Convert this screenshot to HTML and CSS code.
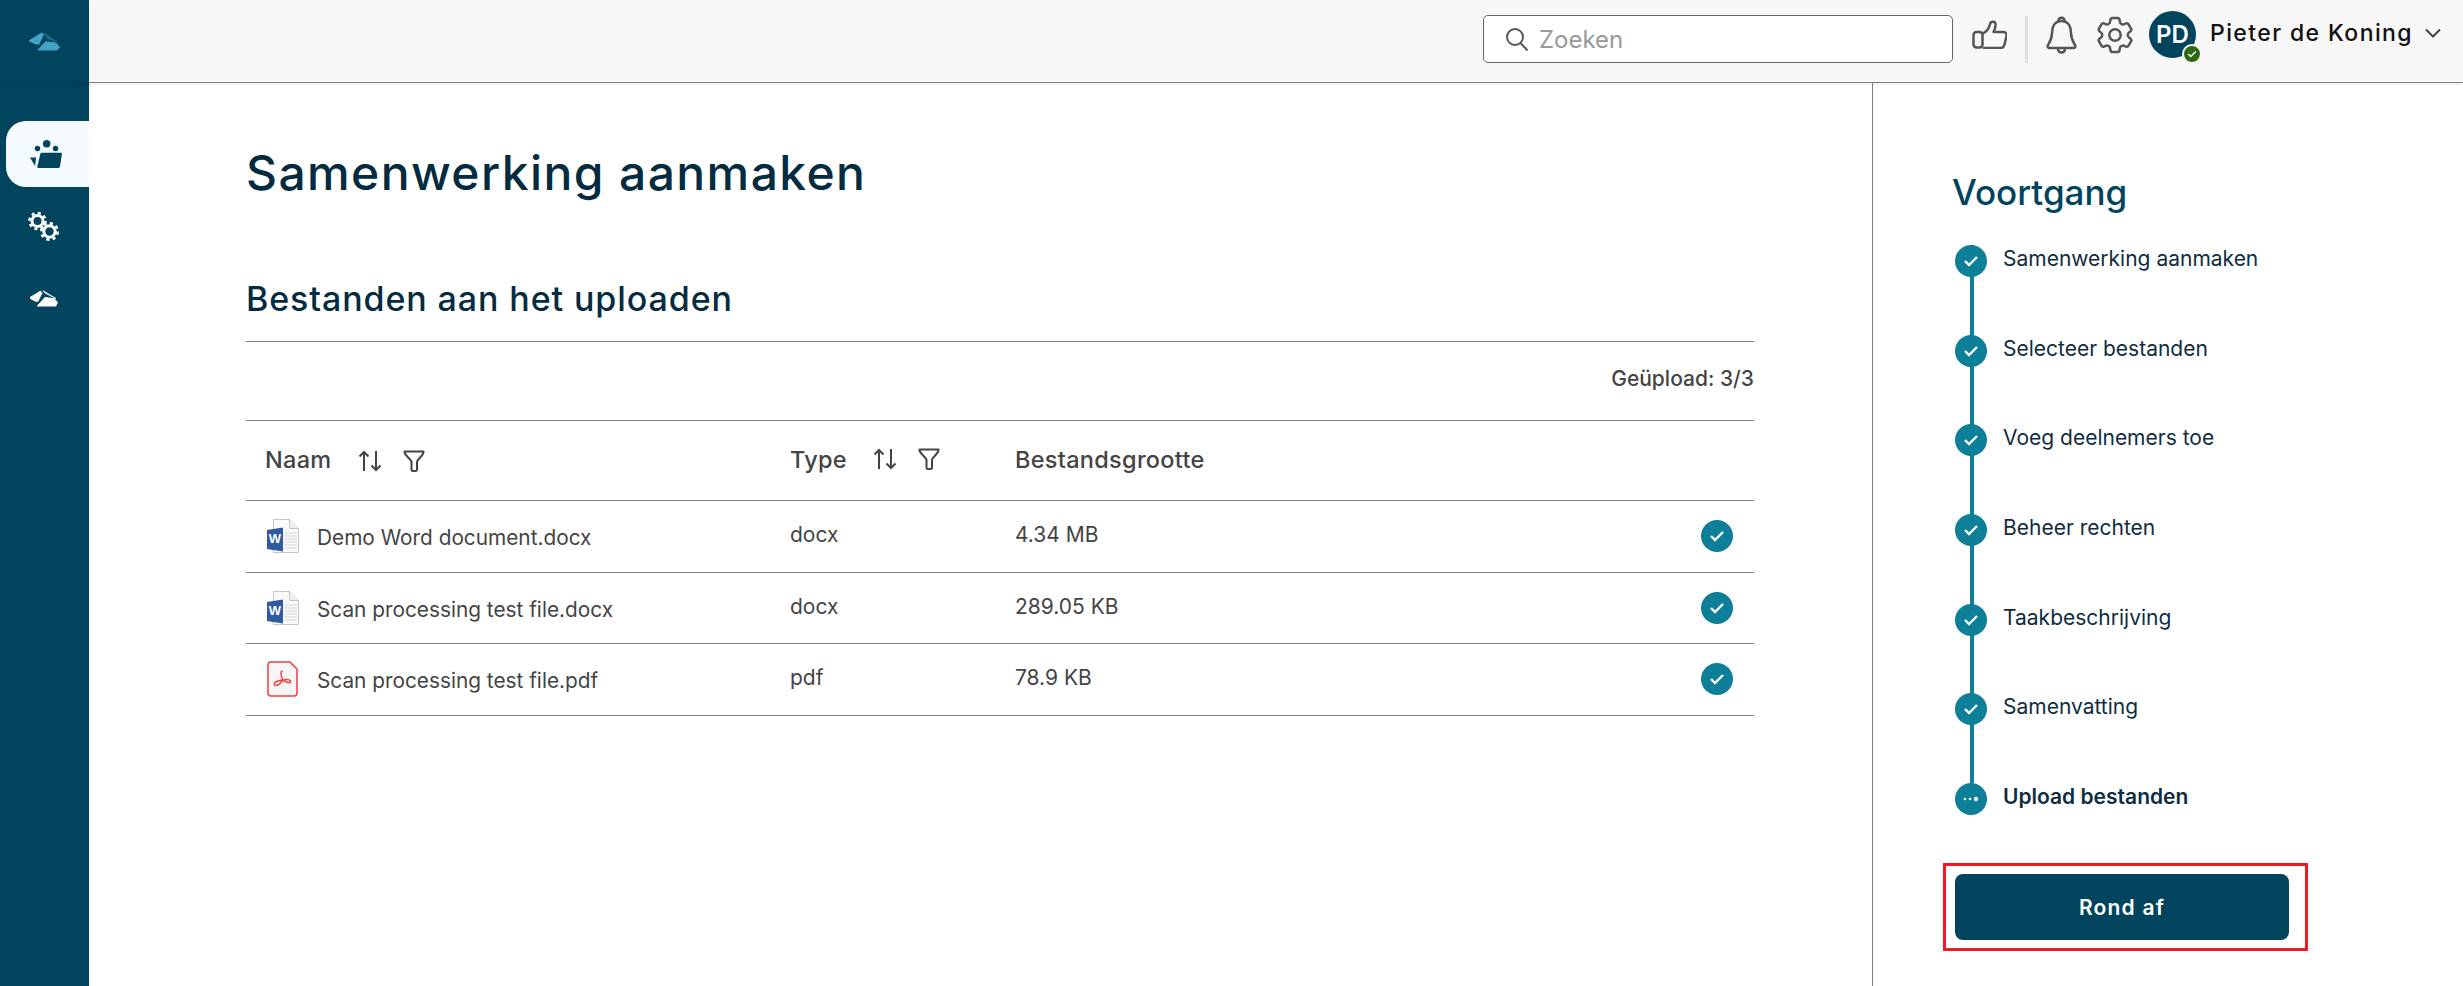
FILE: index.html
```html
<!DOCTYPE html>
<html lang="nl">
<head>
    <meta charset="UTF-8">
    <title>Samenwerking aanmaken</title>
    <link rel="stylesheet" href="styles.css">
</head>
<body>

<!-- Shared icons -->
<svg class="sprite">
    <symbol id="i-check" viewBox="0 0 16 12"><path d="m2 6 4 4 8-8" fill="none" stroke="#fff" stroke-width="2.400"/></symbol>
    <symbol id="i-sort" viewBox="0 0 24 22"><path d="M6 21V2M1.500 6.500 6 2l4.500 4.500M18 1v19M13.500 15.500 18 20l4.500-4.500" fill="none" stroke="#444" stroke-width="2"/></symbol>
    <symbol id="i-filter" viewBox="0 0 22 22"><path d="M1.500 1.500h19c.5 4-6 7-6.500 10.500v7.500c0 1-1 1.500-2 1.500h-2c-1 0-1.500-1-1.500-1.500V12C8 8.500 1 5.500 1.500 1.500Z" fill="none" stroke="#444" stroke-width="2" stroke-linejoin="round"/></symbol>
    <symbol id="i-word" viewBox="0 0 32 34"><path d="M6.500.5h16l9 9v24h-25Z" fill="#fafafa" stroke="#c4c4c4"/><path d="M22.500.5v9h9" fill="#eee" stroke="#c4c4c4"/><path d="M17 14h13M17 17h13M17 20h13M17 23h13M17 26h13M17 29h13" stroke="#d4d4d4"/><path d="M0 11 16 8.500v24L0 30Z" fill="#2f5aa0"/></symbol>
</svg>

<div class="app">
    <!-- Sidebar -->
    <aside class="sidebar">
        <div class="side-logo">
            <svg width="31" height="19" viewBox="0 0 92 55" stroke-linejoin="round"><path d="M2 24 37 3l6 4-14 28-7 0L2 27Z" fill="#45a3c6" stroke="#45a3c6" stroke-width="3"/><path d="M43 1 84 29 55 19Z" fill="#1f6a88" stroke="#1f6a88" stroke-width="2"/><path d="M27 53 50 28l29 4 11 12-8 9Z" fill="#45a3c6" stroke="#45a3c6" stroke-width="3"/></svg>
        </div>
        <nav class="side-nav">
            <a class="side-item active">
                <svg width="32" height="28" viewBox="0 0 94 82" fill="#00445e"><circle cx="49" cy="11" r="11"/><circle cx="22" cy="25" r="8"/><circle cx="75" cy="25" r="8"/><path d="M0 51h18l-3 25Z"/><path d="M35 37h56c2 0 3 1 3 3l-6 38c-.5 3-2 4-5 4H25c-3 0-4-2-3.500-4l9-38c.5-2 2-3 4.500-3Z"/></svg>
            </a>
            <a class="side-item">
                <svg width="31" height="31" viewBox="0 0 31 31" fill="none" stroke="#fff"><circle cx="9.500" cy="10" r="5.500" stroke-width="3"/><circle cx="9.500" cy="10" r="8" stroke-width="2.600" stroke-dasharray="3.100 3.180"/><circle cx="21.500" cy="20.500" r="5.700" stroke-width="3"/><circle cx="21.500" cy="20.500" r="8.200" stroke-width="2.600" stroke-dasharray="3.200 3.240"/></svg>
            </a>
            <a class="side-item">
                <svg width="28" height="17" viewBox="0 0 82 48" fill="#fff" stroke="#fff" stroke-linejoin="round"><path d="M2 20 30 3l5 4-12 25-6 0L2 24Z" stroke-width="3"/><path d="M38 1 76 24 44 8Z" stroke-width="2"/><path d="M22 46 44 21l27 4 9 11-5 10Z" stroke-width="3"/></svg>
            </a>
        </nav>
    </aside>

    <div class="main-area">
        <!-- Top bar -->
        <header class="topbar">
            <div class="search">
                <svg width="24" height="24" viewBox="0 0 24 24" fill="none" stroke="#555" stroke-width="2"><circle cx="10" cy="10" r="8"/><path d="m15.500 16 7 7.500"/></svg>
                <span>Zoeken</span>
            </div>
            <svg class="top-icon thumb-icon" width="35" height="29" viewBox="0 0 35 29" fill="none" stroke="#555" stroke-width="2.500" stroke-linejoin="round"><rect x="1.500" y="12" width="9" height="15.500" rx="3"/><path d="M10.500 13.500c4-1.500 6.500-5 7.500-9.500.5-2.500 5-3.500 5.500 0 .3 2-.5 5-2 8h9.500c2.500 0 4 1.500 3.500 4l-2 8.500c-.5 2-1.500 3.500-4 3.500H10.500"/></svg>
            <span class="top-sep"></span>
            <svg class="top-icon bell-icon" width="31" height="38" viewBox="0 0 31 38" fill="none" stroke="#555" stroke-width="2.500" stroke-linejoin="round"><path d="M15.500 5C8.500 5 6 11 6 17c0 6-2.500 9.500-4 12-1 2 0 3 2 3h23c2 0 3-1 2-3-1.500-2.500-4-6-4-12 0-6-2.500-12-9.500-12Z"/><path d="M12.500 5c0-4.500 6-4.500 6 0"/><path d="M12 32c0 6 7 6 7 0"/></svg>
            <svg class="top-icon gear-icon" width="36" height="38" viewBox="2.500 2.500 19 19" fill="none" stroke="#555" stroke-width="1.300" stroke-linejoin="round"><circle cx="12" cy="12" r="3"/><path d="M9.594 3.940c.09-.542.56-.94 1.110-.94h2.593c.55 0 1.020.398 1.110.94l.213 1.281c.063.374.313.686.645.870.074.04.147.083.22.127.325.196.72.257 1.075.124l1.217-.456a1.125 1.125 0 0 1 1.370.49l1.296 2.247a1.125 1.125 0 0 1-.26 1.431l-1.003.827c-.293.241-.438.613-.43.992a7.723 7.723 0 0 1 0 .255c-.008.378.137.75.43.991l1.004.827c.424.35.534.955.26 1.430l-1.298 2.247a1.125 1.125 0 0 1-1.369.491l-1.217-.456c-.355-.133-.75-.072-1.076.124a6.470 6.470 0 0 1-.22.128c-.331.183-.581.495-.644.869l-.213 1.281c-.09.543-.56.94-1.110.94h-2.594c-.55 0-1.019-.398-1.110-.94l-.213-1.281c-.062-.374-.312-.686-.644-.87a6.520 6.520 0 0 1-.22-.127c-.325-.196-.72-.257-1.076-.124l-1.217.456a1.125 1.125 0 0 1-1.369-.49l-1.297-2.247a1.125 1.125 0 0 1 .26-1.431l1.004-.827c.292-.24.437-.613.43-.991a6.932 6.932 0 0 1 0-.255c.007-.38-.138-.751-.43-.992l-1.004-.827a1.125 1.125 0 0 1-.26-1.430l1.297-2.247a1.125 1.125 0 0 1 1.370-.491l1.216.456c.356.133.751.072 1.076-.124.072-.044.146-.086.22-.128.332-.183.582-.495.644-.869l.214-1.280Z"/></svg>
            <div class="avatar">PD
                <span class="avatar-badge"><svg width="10" height="8" viewBox="0 0 16 12"><use href="#i-check"/></svg></span>
            </div>
            <span class="user-name">Pieter de Koning</span>
            <svg class="user-caret" width="16" height="10" viewBox="0 0 16 10" fill="none" stroke="#444" stroke-width="2"><path d="m1 1.500 7 7 7-7"/></svg>
        </header>

        <div class="content">
            <main class="page">
                <h1>Samenwerking aanmaken</h1>
                <h2>Bestanden aan het uploaden</h2>
                <div class="upload-count">Geüpload: 3/3</div>

                <div class="file-table">
                    <div class="file-row file-head">
                        <div class="col-name"><span class="label-name">Naam</span>
                            <svg class="sort-icon" width="24" height="22"><use href="#i-sort"/></svg>
                            <svg class="filter-icon" width="22" height="22"><use href="#i-filter"/></svg>
                        </div>
                        <div class="col-type"><span class="label-type">Type</span>
                            <svg class="sort-icon" width="24" height="22"><use href="#i-sort"/></svg>
                            <svg class="filter-icon" width="22" height="22"><use href="#i-filter"/></svg>
                        </div>
                        <div class="col-size">Bestandsgrootte</div>
                        <div class="col-status"></div>
                    </div>

                    <div class="file-row">
                        <div class="col-name">
                            <svg class="file-icon" width="32" height="34"><use href="#i-word"/><text x="8" y="24" class="word-letter">W</text></svg>
                            <span class="file-name">Demo Word document.docx</span>
                        </div>
                        <div class="col-type">docx</div>
                        <div class="col-size">4.34 MB</div>
                        <div class="col-status"><span class="check-dot"><svg width="16" height="12"><use href="#i-check"/></svg></span></div>
                    </div>
                    <div class="file-row">
                        <div class="col-name">
                            <svg class="file-icon" width="32" height="34"><use href="#i-word"/><text x="8" y="24" class="word-letter">W</text></svg>
                            <span class="file-name">Scan processing test file.docx</span>
                        </div>
                        <div class="col-type">docx</div>
                        <div class="col-size">289.05 KB</div>
                        <div class="col-status"><span class="check-dot"><svg width="16" height="12"><use href="#i-check"/></svg></span></div>
                    </div>
                    <div class="file-row">
                        <div class="col-name">
                            <svg class="file-icon" width="32" height="36" viewBox="0 0 32 36" fill="none"><path d="M4 1h19l7 7v24c0 1.500-1 3-3 3H4c-1.500 0-3-1-3-3V4c0-2 1.500-3 3-3Z" fill="#f6f6f6" stroke="#f04040" stroke-width="1.500"/><path d="M15.500 10c-2.500 0-1.500 5 .5 9M16 19c-2 3-6 7-8.500 5-1.500-2 3-5 8.500-5 5-1 8 0 7.500 2-1 1.500-5.500 0-7.500-2Z" stroke="#f04040" stroke-width="1.500"/></svg>
                            <span class="file-name">Scan processing test file.pdf</span>
                        </div>
                        <div class="col-type">pdf</div>
                        <div class="col-size">78.9 KB</div>
                        <div class="col-status"><span class="check-dot"><svg width="16" height="12"><use href="#i-check"/></svg></span></div>
                    </div>
                </div>
            </main>

            <!-- Progress panel -->
            <aside class="progress">
                <h3>Voortgang</h3>
                <ol class="steps">
                    <li class="step"><span class="check-dot"><svg width="16" height="12"><use href="#i-check"/></svg></span>Samenwerking aanmaken</li>
                    <li class="step"><span class="check-dot"><svg width="16" height="12"><use href="#i-check"/></svg></span>Selecteer bestanden</li>
                    <li class="step"><span class="check-dot"><svg width="16" height="12"><use href="#i-check"/></svg></span>Voeg deelnemers toe</li>
                    <li class="step"><span class="check-dot"><svg width="16" height="12"><use href="#i-check"/></svg></span>Beheer rechten</li>
                    <li class="step"><span class="check-dot"><svg width="16" height="12"><use href="#i-check"/></svg></span>Taakbeschrijving</li>
                    <li class="step"><span class="check-dot"><svg width="16" height="12"><use href="#i-check"/></svg></span>Samenvatting</li>
                    <li class="step current"><span class="check-dot"><svg width="16" height="6" viewBox="0 0 16 6" fill="#fff"><circle cx="2" cy="3" r="1.300"/><circle cx="7" cy="3" r="1.300"/><circle cx="13" cy="3" r="2.200"/></svg></span>Upload bestanden</li>
                </ol>
                <div class="finish-mark">
                    <button class="finish-btn">Rond af</button>
                </div>
            </aside>
        </div>
    </div>
</div>

</body>
</html>
```

FILE: styles.css
```css
* {
    box-sizing: border-box;
}
html, body {
    height: 100%;
}
body {
    margin: 0;
    font-family: "Inter", "Open Sans", sans-serif;
    color: #0f2d3f;
    background-color: #fff;
    overflow: hidden;
}
.sprite {
    display: none;
}
.app {
    display: flex;
    height: 986px;
}

/* Sidebar */
.sidebar {
    width: 89px;
    flex: none;
    background-color: #00445e;
}
.side-logo {
    height: 83px;
    display: flex;
    align-items: center;
    justify-content: center;
    box-shadow: 0 2px 4px rgba(0, 0, 0, 0.15);
}
.side-nav {
    margin-top: 38px;
    display: flex;
    flex-direction: column;
}
.side-item {
    height: 66px;
    margin-left: 6px;
    margin-bottom: 6px;
    display: flex;
    align-items: center;
    justify-content: center;
    padding-right: 8px;
}
.side-item.active {
    background-color: #f5faff;
    border-radius: 20px 0 0 20px;
    padding-right: 4px;
}

/* Top bar */
.main-area {
    flex: 1;
    display: flex;
    flex-direction: column;
    min-width: 0;
}
.topbar {
    height: 83px;
    flex: none;
    display: flex;
    align-items: center;
    background-color: #f7f7f7;
    border-bottom: 1px solid #808080;
    padding: 0 0 4px 1394px;
    box-shadow: 0 2px 3px rgba(0, 0, 0, 0.06);
}
.search {
    width: 470px;
    height: 48px;
    flex: none;
    display: flex;
    align-items: center;
    gap: 10px;
    padding: 0 0 0 21px;
    background-color: #fff;
    border: 1.5px solid #666;
    border-radius: 5px;
    color: #999;
    font-size: 24px;
}
.top-icon {
    flex: none;
    margin-bottom: 9px;
}
.thumb-icon {
    margin-left: 19px;
}
.top-sep {
    width: 3px;
    height: 47px;
    margin: 0 18px;
    background-color: #e0e0e0;
}
.gear-icon {
    margin-left: 20px;
}
.avatar {
    position: relative;
    width: 47px;
    height: 47px;
    flex: none;
    margin: 0 0 10px 16px;
    display: flex;
    align-items: center;
    justify-content: center;
    border-radius: 50%;
    background-color: #00445e;
    color: #fff;
    font-size: 24px;
    font-weight: 600;
}
.avatar-badge {
    position: absolute;
    right: -6px;
    bottom: -6px;
    width: 20px;
    height: 20px;
    display: flex;
    align-items: center;
    justify-content: center;
    border: 2px solid #f7f7f7;
    border-radius: 50%;
    background-color: #2b6a0e;
}
.user-name {
    margin: 0 0 12px 14px;
    font-size: 23px;
    font-weight: 500;
    color: #111;
    letter-spacing: 1.400px;
    white-space: nowrap;
}
.user-caret {
    margin: 0 0 13px 12px;
    flex: none;
}

/* Page content */
.content {
    flex: 1;
    display: flex;
    min-height: 0;
}
.page {
    width: 1784px;
    flex: none;
    padding: 0 118px 0 157px;
    border-right: 1px solid #808080;
}
h1 {
    margin: 60px 0 0;
    font-size: 48px;
    line-height: 60px;
    font-weight: 500;
    letter-spacing: 1.400px;
    color: #042c40;
}
h2 {
    margin: 75px 0 0;
    padding-bottom: 21px;
    border-bottom: 1px solid #808080;
    font-size: 34px;
    line-height: 42px;
    font-weight: 500;
    letter-spacing: 0.9px;
    color: #042c40;
}
.upload-count {
    height: 78px;
    padding-top: 24px;
    text-align: right;
    font-size: 21px;
    font-weight: 500;
    color: #444;
}

/* File table */
.file-table {
    border-top: 1px solid #808080;
}
.file-row {
    display: flex;
    align-items: center;
    height: 71.5px;
    border-bottom: 1px solid #808080;
    font-size: 21px;
    color: #444;
}
.file-head {
    height: 80px;
    font-weight: 500;
    font-size: 23.500px;
    letter-spacing: 0.3px;
}
.col-name {
    width: 544px;
    padding-left: 19px;
    display: flex;
    align-items: center;
}
.file-name {
    margin: 3px 0 0 18px;
    font-size: 20.800px;
}
.file-icon {
    flex: none;
    margin-left: 2px;
}
.col-type,
.col-size {
    padding-bottom: 3px;
}
.col-type {
    width: 225px;
    display: flex;
    align-items: center;
}
.col-size {
    flex: 1;
}
.col-status {
    width: 53px;
}
.label-name {
    width: 93px;
    padding-bottom: 2px;
}
.label-type {
    width: 83px;
}
.sort-icon,
.filter-icon {
    flex: none;
}
.filter-icon {
    margin-left: 21px;
}
.word-letter {
    font-family: "Liberation Sans", sans-serif;
    font-size: 13px;
    font-weight: 700;
    fill: #fff;
    text-anchor: middle;
}
.check-dot {
    width: 32px;
    height: 32px;
    display: flex;
    align-items: center;
    justify-content: center;
    flex: none;
    border-radius: 50%;
    background-color: #0e7f99;
}

/* Progress panel */
.progress {
    flex: 1;
    padding: 84px 0 0 79px;
}
h3 {
    margin: 0;
    font-size: 35px;
    line-height: 50px;
    font-weight: 500;
    color: #00445e;
}
.steps {
    list-style: none;
    margin: 28px 0 0 3px;
    padding: 0;
}
.step {
    position: relative;
    height: 89.7px;
    display: flex;
    align-items: flex-start;
    gap: 16px;
    font-size: 21px;
    line-height: 28px;
    color: #0f2d3f;
}
.step::before {
    content: "";
    position: absolute;
    left: 15px;
    top: 0;
    width: 4px;
    height: 100%;
    background-color: #0e7f99;
}
.step .check-dot {
    position: relative;
}
.step.current {
    font-weight: 600;
    height: 60px;
}
.step.current::before {
    display: none;
}
.finish-mark {
    width: 365px;
    height: 88px;
    margin: 20px 0 0 -9px;
    padding: 8px 9px;
    border: 3px solid #ed1c24;
}
.finish-btn {
    width: 334px;
    height: 66px;
    display: block;
    border: none;
    border-radius: 8px;
    background-color: #00445e;
    color: #fff;
    font-family: inherit;
    font-size: 21px;
    font-weight: 600;
    letter-spacing: 1.200px;
}
```
